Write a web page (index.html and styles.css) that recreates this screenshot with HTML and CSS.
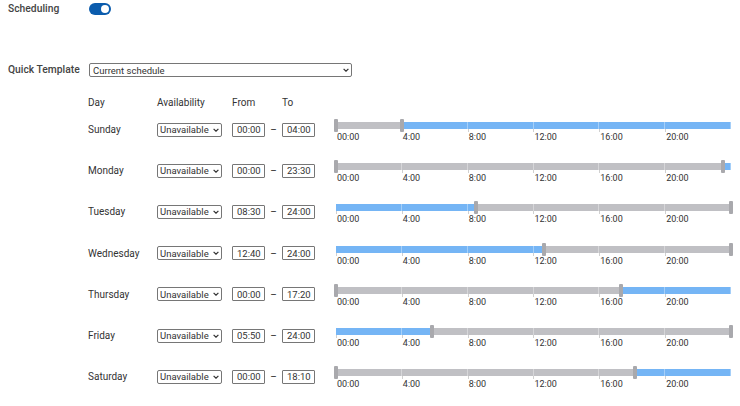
FILE: index.html
```html
<!DOCTYPE html>
<html>
<head>
<meta charset="utf-8">
<link rel="stylesheet" href="styles.css">
</head>
<body>
<div class="setting">
  <span class="setting-label">Scheduling</span>
  <span class="toggle"><span class="knob"></span></span>
</div>
<div class="template">
  <span class="setting-label">Quick Template</span>
  <span class="select-wrap wide"><select class="tpl-select"><option>Current schedule</option></select><svg class="chev" viewBox="0 0 6 4"><path d="M0.6 0.8 L3 3.2 L5.4 0.8" fill="none" stroke="#333" stroke-width="1.2"/></svg></span>
</div>
<div class="schedule">
  <div class="row head"><span>Day</span><span>Availability</span><span>From</span><span>To</span><span></span></div>

  <div class="row">
    <span class="day">Sunday</span>
    <span class="select-wrap"><select class="sel"><option>Unavailable</option></select><svg class="chev" viewBox="0 0 6 4"><path d="M0.6 0.8 L3 3.2 L5.4 0.8" fill="none" stroke="#333" stroke-width="1.2"/></svg></span>
    <span class="from"><input class="time" value="00:00"><span class="dash">–</span></span>
    <span class="to"><input class="time" value="04:00"></span>
    <div class="timeline">
      <div class="track">
        <span class="seg off" style="width:16.667%"></span><span class="seg on" style="width:83.333%"></span>
        <span class="handle" style="left:0%"></span><span class="handle" style="left:16.667%"></span>
      </div>
      <div class="scale"><span>00:00</span><span>4:00</span><span>8:00</span><span>12:00</span><span>16:00</span><span>20:00</span></div>
    </div>
  </div>

  <div class="row">
    <span class="day">Monday</span>
    <span class="select-wrap"><select class="sel"><option>Unavailable</option></select><svg class="chev" viewBox="0 0 6 4"><path d="M0.6 0.8 L3 3.2 L5.4 0.8" fill="none" stroke="#333" stroke-width="1.2"/></svg></span>
    <span class="from"><input class="time" value="00:00"><span class="dash">–</span></span>
    <span class="to"><input class="time" value="23:30"></span>
    <div class="timeline">
      <div class="track">
        <span class="seg off" style="width:97.917%"></span><span class="seg on" style="width:2.083%"></span>
        <span class="handle" style="left:0%"></span><span class="handle" style="left:97.917%"></span>
      </div>
      <div class="scale"><span>00:00</span><span>4:00</span><span>8:00</span><span>12:00</span><span>16:00</span><span>20:00</span></div>
    </div>
  </div>

  <div class="row">
    <span class="day">Tuesday</span>
    <span class="select-wrap"><select class="sel"><option>Unavailable</option></select><svg class="chev" viewBox="0 0 6 4"><path d="M0.6 0.8 L3 3.2 L5.4 0.8" fill="none" stroke="#333" stroke-width="1.2"/></svg></span>
    <span class="from"><input class="time" value="08:30"><span class="dash">–</span></span>
    <span class="to"><input class="time" value="24:00"></span>
    <div class="timeline">
      <div class="track">
        <span class="seg on" style="width:35.417%"></span><span class="seg off" style="width:64.583%"></span>
        <span class="handle" style="left:35.417%"></span><span class="handle" style="left:100%"></span>
      </div>
      <div class="scale"><span>00:00</span><span>4:00</span><span>8:00</span><span>12:00</span><span>16:00</span><span>20:00</span></div>
    </div>
  </div>

  <div class="row">
    <span class="day">Wednesday</span>
    <span class="select-wrap"><select class="sel"><option>Unavailable</option></select><svg class="chev" viewBox="0 0 6 4"><path d="M0.6 0.8 L3 3.2 L5.4 0.8" fill="none" stroke="#333" stroke-width="1.2"/></svg></span>
    <span class="from"><input class="time" value="12:40"><span class="dash">–</span></span>
    <span class="to"><input class="time" value="24:00"></span>
    <div class="timeline">
      <div class="track">
        <span class="seg on" style="width:52.778%"></span><span class="seg off" style="width:47.222%"></span>
        <span class="handle" style="left:52.778%"></span><span class="handle" style="left:100%"></span>
      </div>
      <div class="scale"><span>00:00</span><span>4:00</span><span>8:00</span><span>12:00</span><span>16:00</span><span>20:00</span></div>
    </div>
  </div>

  <div class="row">
    <span class="day">Thursday</span>
    <span class="select-wrap"><select class="sel"><option>Unavailable</option></select><svg class="chev" viewBox="0 0 6 4"><path d="M0.6 0.8 L3 3.2 L5.4 0.8" fill="none" stroke="#333" stroke-width="1.2"/></svg></span>
    <span class="from"><input class="time" value="00:00"><span class="dash">–</span></span>
    <span class="to"><input class="time" value="17:20"></span>
    <div class="timeline">
      <div class="track">
        <span class="seg off" style="width:72.222%"></span><span class="seg on" style="width:27.778%"></span>
        <span class="handle" style="left:0%"></span><span class="handle" style="left:72.222%"></span>
      </div>
      <div class="scale"><span>00:00</span><span>4:00</span><span>8:00</span><span>12:00</span><span>16:00</span><span>20:00</span></div>
    </div>
  </div>

  <div class="row">
    <span class="day">Friday</span>
    <span class="select-wrap"><select class="sel"><option>Unavailable</option></select><svg class="chev" viewBox="0 0 6 4"><path d="M0.6 0.8 L3 3.2 L5.4 0.8" fill="none" stroke="#333" stroke-width="1.2"/></svg></span>
    <span class="from"><input class="time" value="05:50"><span class="dash">–</span></span>
    <span class="to"><input class="time" value="24:00"></span>
    <div class="timeline">
      <div class="track">
        <span class="seg on" style="width:24.306%"></span><span class="seg off" style="width:75.694%"></span>
        <span class="handle" style="left:24.306%"></span><span class="handle" style="left:100%"></span>
      </div>
      <div class="scale"><span>00:00</span><span>4:00</span><span>8:00</span><span>12:00</span><span>16:00</span><span>20:00</span></div>
    </div>
  </div>

  <div class="row">
    <span class="day">Saturday</span>
    <span class="select-wrap"><select class="sel"><option>Unavailable</option></select><svg class="chev" viewBox="0 0 6 4"><path d="M0.6 0.8 L3 3.2 L5.4 0.8" fill="none" stroke="#333" stroke-width="1.2"/></svg></span>
    <span class="from"><input class="time" value="00:00"><span class="dash">–</span></span>
    <span class="to"><input class="time" value="18:10"></span>
    <div class="timeline">
      <div class="track">
        <span class="seg off" style="width:75.694%"></span><span class="seg on" style="width:24.306%"></span>
        <span class="handle" style="left:0%"></span><span class="handle" style="left:75.694%"></span>
      </div>
      <div class="scale"><span>00:00</span><span>4:00</span><span>8:00</span><span>12:00</span><span>16:00</span><span>20:00</span></div>
    </div>
  </div>
</div>
</body>
</html>
```

FILE: styles.css
```css
* { box-sizing: border-box; }
body {
  margin: 0;
  background: #fff;
  color: #333;
  font-family: Roboto, "Liberation Sans", sans-serif;
  font-size: 10px;
}
.setting {
  display: flex;
  align-items: center;
  padding: 3px 0 0 8px;
  height: 15px;
}
.setting-label {
  width: 81px;
  font-family: "Roboto Medium", Roboto, "Liberation Sans", sans-serif;
  font-weight: 500;
  font-size: 10.3px;
  line-height: 12px;
  color: #444;
}
.toggle {
  width: 22px;
  height: 12px;
  border-radius: 6px;
  background: #0b5cad;
  display: flex;
  align-items: center;
  justify-content: flex-end;
  padding: 0 2px;
}
.knob {
  width: 8px;
  height: 8px;
  border-radius: 50%;
  background: #fff;
}
.template {
  display: flex;
  align-items: center;
  padding-left: 8px;
  margin-top: 48px;
  height: 14px;
}
.template .setting-label { width: 81px; }
.select-wrap {
  position: relative;
  display: flex;
  width: 65px;
}
.select-wrap.wide { width: 263px; }
.chev {
  position: absolute;
  right: 3px;
  top: 5px;
  width: 6px;
  height: 4px;
  pointer-events: none;
}
.tpl-select, .sel, .time {
  appearance: none;
  -webkit-appearance: none;
  font-family: Roboto, "Liberation Sans", sans-serif;
  font-size: 9.5px;
  color: #333;
  height: 14px;
  border: 1px solid #767676;
  border-radius: 2px;
  background: #fff;
  margin: 0;
  outline: none;
}
.tpl-select { width: 100%; padding: 0 12px 0 3px; }
.sel { width: 100%; padding: 0 10px 0 2px; }
.time { width: 33px; padding: 0 0 0 4px; border-radius: 1px; }
.schedule { margin: 19px 0 0 88px; }
.row {
  display: grid;
  grid-template-columns: 69px 75px 50px 54px 395px;
  height: 41.2px;
  align-items: center;
}
.row.head { height: 13px; line-height: 13px; }
.from { display: flex; align-items: center; }
.dash { width: 17px; text-align: center; }
.timeline { align-self: start; padding-top: 13px; }
.track {
  position: relative;
  display: flex;
  height: 7px;
}
.track::after {
  content: "";
  position: absolute;
  inset: 0;
  background: repeating-linear-gradient(to right, transparent 0, transparent calc(16.6667% - 1px), rgba(255,255,255,0.35) calc(16.6667% - 1px), rgba(255,255,255,0.35) 16.6667%);
}
.seg { display: block; height: 100%; }
.seg.on { background: #75b5f5; }
.seg.off { background: #c0c0c4; }
.handle {
  position: absolute;
  top: -3px;
  width: 4px;
  height: 13px;
  margin-left: -2px;
  background: #a9a9ad;
  border-radius: 1px;
  z-index: 1;
}
.scale {
  display: flex;
  margin-top: 3px;
  font-size: 9px;
  line-height: 10px;
}
.scale span {
  position: relative;
  width: 16.6667%;
  padding-left: 1px;
}
.scale span::before {
  content: "";
  position: absolute;
  left: 0;
  top: -3px;
  width: 1px;
  height: 3px;
  background: #d0d0d0;
}
```
